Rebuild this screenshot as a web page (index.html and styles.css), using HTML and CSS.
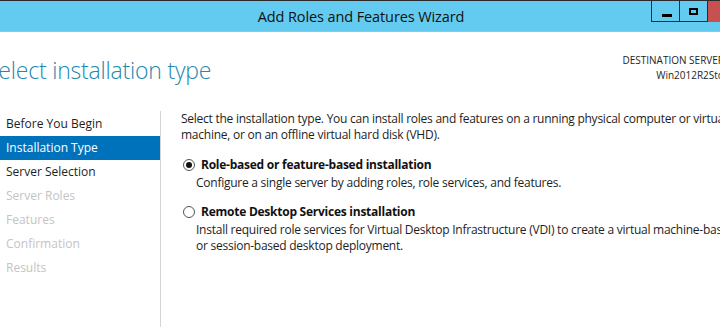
FILE: index.html
```html
<!DOCTYPE html>
<html lang="en">
<head>
    <meta charset="UTF-8">
    <title>Add Roles and Features Wizard</title>
    <link rel="stylesheet" href="styles.css">
</head>
<body>
    <div class="window">
        <div class="titlebar">
            <div></div>
            <div class="title">Add Roles and Features Wizard</div>
            <div class="controls">
                <div class="ctl"><span class="min-icon"></span></div>
                <div class="ctl"><span class="max-icon"></span></div>
                <div class="ctl close"></div>
            </div>
        </div>

        <div class="header">
            <h1 class="page-title">Select installation type</h1>
            <div class="dest">
                <div>DESTINATION SERVER</div>
                <div>Win2012R2Std</div>
            </div>
        </div>

        <div class="main">
            <ul class="nav">
                <li>Before You Begin</li>
                <li class="active">Installation Type</li>
                <li>Server Selection</li>
                <li class="off">Server Roles</li>
                <li class="off">Features</li>
                <li class="off">Confirmation</li>
                <li class="off">Results</li>
            </ul>

            <div class="content">
                <p class="intro">Select the installation type. You can install roles and features on a running physical computer or virtual machine, or on an offline virtual hard disk (VHD).</p>

                <div class="option">
                    <label class="opt-label"><span class="radio checked"></span>Role-based or feature-based installation</label>
                    <p class="opt-desc">Configure a single server by adding roles, role services, and features.</p>
                </div>

                <div class="option">
                    <label class="opt-label"><span class="radio"></span>Remote Desktop Services installation</label>
                    <p class="opt-desc">Install required role services for Virtual Desktop Infrastructure (VDI) to create a virtual machine-based<br>or session-based desktop deployment.</p>
                </div>
            </div>
        </div>
    </div>
</body>
</html>
```

FILE: styles.css
```css
html, body {
    margin: 0;
    padding: 0;
    background: #ffffff;
    overflow: hidden;
}

body {
    width: 720px;
    height: 327px;
    font-family: 'Open Sans', 'Noto Sans', sans-serif;
    color: #1e1e1e;
}

/* window is wider than the view, its edges are cut off */
.window {
    width: 750px;
    margin-left: -14px;
    height: 327px;
    background: #fff;
}

.titlebar {
    height: 30px;
    border-top: 1px solid #2b2b2b;
    border-bottom: 1px solid #9ec3d6;
    background: #63cbef;
    display: grid;
    grid-template-columns: 1fr auto 1fr;
}

.title {
    font-size: 14.5px;
    line-height: 31px;
    color: #111;
    letter-spacing: -0.1px;
}

.controls {
    justify-self: end;
    display: flex;
    height: 21px;
    border-bottom: 1px solid #2b2b2b;
    margin-top: -1px;
}

.ctl {
    width: 27px;
    height: 21px;
    border-left: 1px solid #2b2b2b;
    border-top: 1px solid #2b2b2b;
    display: flex;
    align-items: center;
    justify-content: center;
}

.ctl.close {
    width: 28px;
    background: #c75050;
}

.min-icon {
    width: 10px;
    height: 3px;
    background: #000;
    margin-top: 7px;
    margin-left: 2px;
}

.max-icon {
    width: 5px;
    height: 3px;
    border: 2px solid #000;
}

.header {
    display: flex;
    justify-content: space-between;
    padding: 0 12px 0 0;
    height: 79px;
}

.page-title {
    margin: 0;
    margin-top: 23px;
    margin-left: 0;
    font-size: 23px;
    font-weight: 300;
    color: #2287b0;
    line-height: 30px;
    letter-spacing: -0.2px;
}

.dest {
    margin-top: 21px;
    text-align: right;
    font-size: 10px;
    line-height: 15px;
    color: #1e1e1e;
}

.main {
    display: flex;
}

.nav {
    list-style: none;
    margin: 0;
    padding: 1px 0 0 0;
    width: 174px;
    flex-shrink: 0;
    height: 220px;
    border-right: 1px solid #d5d5d5;
}

.nav li {
    height: 24px;
    line-height: 24px;
    padding-left: 20px;
    font-size: 12px;
    color: #1e1e1e;
}

.nav li.active {
    background: #0072bc;
    color: #fff;
}

.nav li.off {
    color: #c4c4c4;
}

.content {
    padding-left: 20px;
    font-size: 12px;
    line-height: 16px;
    letter-spacing: -0.25px;
    flex-shrink: 0;
}

.intro {
    margin: 0 0 14px 0;
    width: 560px;
}

.option {
    margin-bottom: 13px;
}

.opt-label {
    display: flex;
    align-items: center;
    font-weight: bold;
    height: 16px;
    color: #111;
}

.radio {
    width: 10px;
    height: 10px;
    margin: 0 6px 0 2px;
    border: 1px solid #555;
    border-radius: 50%;
    display: flex;
    align-items: center;
    justify-content: center;
    background: #fff;
}

.radio.checked::after {
    content: "";
    width: 6px;
    height: 6px;
    border-radius: 50%;
    background: #111;
}

.opt-desc {
    margin: 2px 0 0 15px;
    white-space: nowrap;
}
```
